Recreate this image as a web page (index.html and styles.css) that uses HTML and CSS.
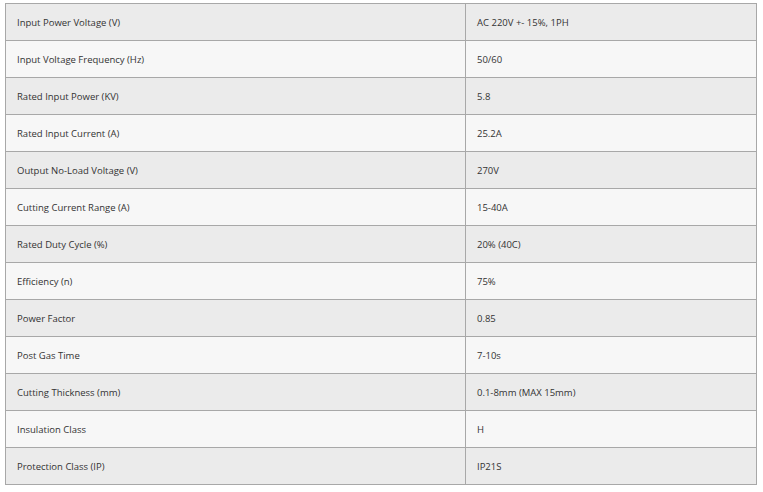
FILE: index.html
```html
<!DOCTYPE html>
<html>
<head>
<meta charset="utf-8">
<link rel="stylesheet" href="styles.css">
</head>
<body>
<table class="spec">
<tbody>
<tr><td class="k">Input Power Voltage (V)</td><td class="v">AC 220V +- 15%, 1PH</td></tr>
<tr><td class="k">Input Voltage Frequency (Hz)</td><td class="v">50/60</td></tr>
<tr><td class="k">Rated Input Power (KV)</td><td class="v">5.8</td></tr>
<tr><td class="k">Rated Input Current (A)</td><td class="v">25.2A</td></tr>
<tr><td class="k">Output No-Load Voltage (V)</td><td class="v">270V</td></tr>
<tr><td class="k">Cutting Current Range (A)</td><td class="v">15-40A</td></tr>
<tr><td class="k">Rated Duty Cycle (%)</td><td class="v">20% (40C)</td></tr>
<tr><td class="k">Efficiency (n)</td><td class="v">75%</td></tr>
<tr><td class="k">Power Factor</td><td class="v">0.85</td></tr>
<tr><td class="k">Post Gas Time</td><td class="v">7-10s</td></tr>
<tr><td class="k">Cutting Thickness (mm)</td><td class="v">0.1-8mm (MAX 15mm)</td></tr>
<tr><td class="k">Insulation Class</td><td class="v">H</td></tr>
<tr><td class="k">Protection Class (IP)</td><td class="v">IP21S</td></tr>
</tbody>
</table>
</body>
</html>
```
FILE: styles.css
```css
html, body {
  margin: 0;
  padding: 0;
  background: #ffffff;
}
body {
  padding: 3px 5px;
  font-family: "Open Sans", "Noto Sans", sans-serif;
  font-size: 9.5px;
  color: #333333;
}
.spec {
  border-collapse: collapse;
  width: 752px;
  table-layout: fixed;
}
.spec td {
  border: 1px solid #a8a8a8;
  height: 36px;
  padding: 1px 11px 0;
  box-sizing: border-box;
  vertical-align: middle;
  color: #333333;
}
.spec tr {
  height: 37px;
}
.spec tr:nth-child(odd) td {
  background: #ebebeb;
}
.spec tr:nth-child(even) td {
  background: #f7f7f7;
}
.spec .k {
  width: 460px;
}
```
